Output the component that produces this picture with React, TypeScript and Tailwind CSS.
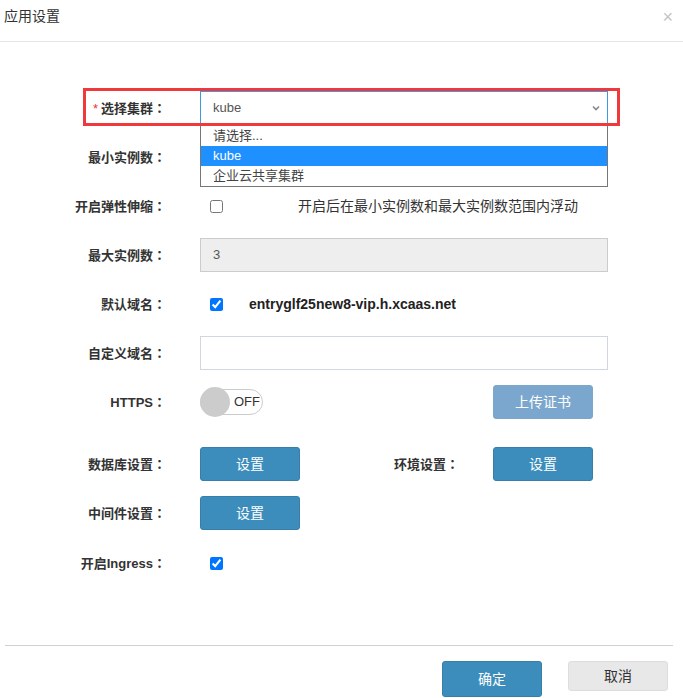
import React from 'react';

const FONT = "font-['Liberation_Sans','Noto_Sans_CJK_SC',sans-serif]";

const Label: React.FC<{ children: React.ReactNode; required?: boolean; className?: string }> = ({
  children,
  required,
  className = 'w-[166px]',
}) => (
  <div className={`${className} shrink-0 text-right text-[13px] font-bold text-[#333]`}>
    {required && <span className="text-[#e33] font-normal mr-[3px]">*</span>}
    {children}
    <span className="font-['Noto_Sans_CJK_JP',sans-serif]">：</span>
  </div>
);

const BlueButton: React.FC<{ children: React.ReactNode; light?: boolean }> = ({ children, light }) => (
  <button
    className={`w-[100px] h-[34px] rounded-[3px] text-[14px] text-white border ${
      light ? 'bg-[#7ba7ce] border-[#7ba7ce]' : 'bg-[#3c8dbc] border-[#367fa9]'
    }`}
  >
    {children}
  </button>
);

export default function App() {
  return (
    <div className={`${FONT} w-full h-[698px] bg-white overflow-hidden flex flex-col`}>
      {/* Header */}
      <div className="h-[42px] shrink-0 border-b border-[#e5e5e5] flex items-center justify-between pl-[4px] pr-[10px] pb-[8px]">
        <span className="text-[14px] text-[#333]">应用设置</span>
        <span className="text-[18px] text-[#c4c4c4] leading-none">×</span>
      </div>

      {/* Form */}
      <div className="flex-1 flex flex-col pt-[49px]">
        {/* Cluster select */}
        <div className="relative flex items-center gap-[34px] h-[34px] mb-[15px] z-10">
          <Label required>选择集群</Label>
          <div className="relative w-[408px] h-[34px]">
            <div className="h-full border border-[#3c9ae0] bg-white flex items-center justify-between pl-[12px] pr-[7px]">
              <span className="text-[13px] text-[#555]">kube</span>
              <svg width="8" height="6" viewBox="0 0 8 6" className="text-[#888]">
                <path d="M1 1.5 L4 4.5 L7 1.5" fill="none" stroke="currentColor" strokeWidth="1.6" />
              </svg>
            </div>
            <div className="absolute left-0 top-[34px] w-full border border-[#767676] bg-white text-[13px] flex flex-col">
              <div className="h-[20px] leading-[20px] pl-[12px] text-[#444]">请选择...</div>
              <div className="h-[20px] leading-[20px] pl-[12px] bg-[#1e90ff] text-white">kube</div>
              <div className="h-[20px] leading-[20px] pl-[12px] text-[#444]">企业云共享集群</div>
            </div>
          </div>
          <div className="absolute left-[83px] top-[-3px] w-[537px] h-[38px] border-[3px] border-[#f0393c] pointer-events-none" />
        </div>

        {/* Min instances */}
        <div className="flex items-center gap-[34px] h-[34px] mb-[15px]">
          <Label>最小实例数</Label>
          <div className="w-[408px] h-[34px] border border-[#ccc]" />
        </div>

        {/* Autoscale */}
        <div className="flex items-center gap-[34px] h-[34px] mb-[15px]">
          <Label>开启弹性伸缩</Label>
          <div className="flex items-center">
            <input type="checkbox" className="w-[13px] h-[13px] ml-[10px] m-0" />
            <span className="ml-[75px] text-[14px] text-[#333]">开启后在最小实例数和最大实例数范围内浮动</span>
          </div>
        </div>

        {/* Max instances */}
        <div className="flex items-center gap-[34px] h-[34px] mb-[15px]">
          <Label>最大实例数</Label>
          <div className="w-[408px] h-[34px] border border-[#ccc] bg-[#eee] flex items-center pl-[12px] text-[13px] text-[#555]">
            3
          </div>
        </div>

        {/* Default domain */}
        <div className="flex items-center gap-[34px] h-[34px] mb-[15px]">
          <Label>默认域名</Label>
          <div className="flex items-center">
            <input type="checkbox" defaultChecked className="w-[13px] h-[13px] ml-[10px] m-0" />
            <span className="ml-[26px] text-[14px] font-bold text-[#222]">entryglf25new8-vip.h.xcaas.net</span>
          </div>
        </div>

        {/* Custom domain */}
        <div className="flex items-center gap-[34px] h-[34px] mb-[15px]">
          <Label>自定义域名</Label>
          <div className="w-[408px] h-[34px] border border-[#d2d6de] bg-white" />
        </div>

        {/* HTTPS */}
        <div className="flex items-center gap-[34px] h-[34px] mb-[28px]">
          <Label>HTTPS</Label>
          <div className="flex items-center w-[408px]">
            <div className="w-[293px] flex items-center">
              <div className="relative w-[63px] h-[26px] rounded-full border border-[#ccc] bg-white flex items-center">
                <div className="absolute left-[-1px] top-[-3px] w-[30px] h-[30px] rounded-full bg-[#ccc]" />
                <span className="ml-[33px] text-[13px] text-[#333]">OFF</span>
              </div>
            </div>
            <BlueButton light>上传证书</BlueButton>
          </div>
        </div>

        {/* Database / env */}
        <div className="flex items-center h-[34px] mb-[15px]">
          <Label>数据库设置</Label>
          <div className="ml-[34px]">
            <BlueButton>设置</BlueButton>
          </div>
          <Label className="w-[159px]">环境设置</Label>
          <div className="ml-[34px]">
            <BlueButton>设置</BlueButton>
          </div>
        </div>

        {/* Middleware */}
        <div className="flex items-center gap-[34px] h-[34px] mb-[16px]">
          <Label>中间件设置</Label>
          <BlueButton>设置</BlueButton>
        </div>

        {/* Ingress */}
        <div className="flex items-center gap-[34px] h-[34px]">
          <Label>开启Ingress</Label>
          <input type="checkbox" defaultChecked className="w-[13px] h-[13px] ml-[10px] m-0" />
        </div>
      </div>

      {/* Footer */}
      <div className="shrink-0 h-[53px] ml-[5px] mr-[10px] border-t border-[#d0d0d0] flex items-start justify-end gap-[26px] pt-[15px] pr-[5px]">
        <button className="w-[100px] h-[36px] rounded-[3px] bg-[#3c8dbc] border border-[#367fa9] text-white text-[14px]">
          确定
        </button>
        <button className="w-[100px] h-[30px] rounded-[3px] bg-[#e8e8e8] border border-[#ddd] text-[#333] text-[14px]">
          取消
        </button>
      </div>
    </div>
  );
}
